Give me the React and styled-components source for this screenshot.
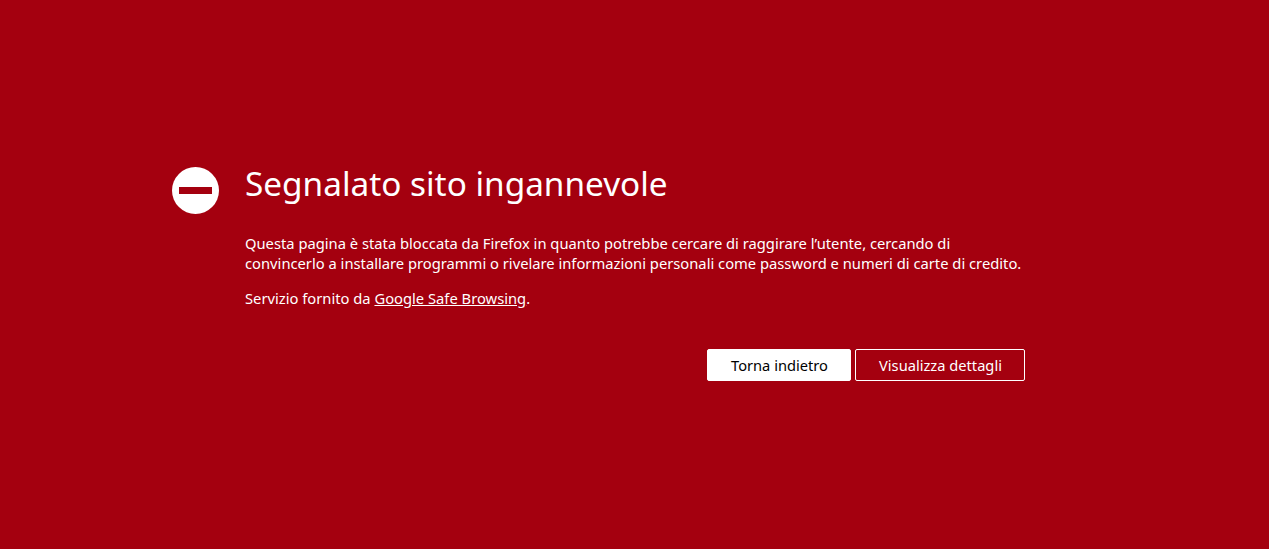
import styled, { createGlobalStyle } from "styled-components";

const GlobalStyle = createGlobalStyle`
  html, body {
    margin: 0;
    padding: 0;
    background: #a4000f;
  }
`;

const Page = styled.div`
  box-sizing: border-box;
  height: 549px;
  display: flex;
  align-items: center;
  justify-content: center;
  background: #a4000f;
  color: #fff;
  font-family: "Noto Sans", sans-serif;
  font-size: 14.74px;
`;

const Container = styled.div`
  box-sizing: border-box;
  width: 780px;
  margin: 0 0 1px 1px;
  position: relative;
`;

const Icon = styled.svg`
  position: absolute;
  left: -73px;
  top: 0;
  width: 47px;
  height: 47px;
`;

const Title = styled.h1`
  margin: 0 0 34px;
  font-size: 33.33px;
  font-weight: 400;
  line-height: 32px;
`;

const Paragraph = styled.p`
  margin: 0 0 15px;
  line-height: 20px;
`;

const Link = styled.a`
  color: #fff;
  text-decoration: underline;
`;

const Actions = styled.div`
  display: flex;
  justify-content: flex-end;
  gap: 4px;
  margin-top: 41px;
`;

const Button = styled.button`
  box-sizing: border-box;
  height: 32px;
  width: ${(p) => (p.$primary ? "144px" : "170px")};
  padding: 0 0 0 1px;
  border: 1px solid #fff;
  border-radius: 2px;
  background: ${(p) => (p.$primary ? "#fff" : "transparent")};
  color: ${(p) => (p.$primary ? "#000" : "#fff")};
  font-family: inherit;
  font-size: 14.67px;
`;

export default function App() {
  return (
    <>
      <GlobalStyle />
      <Page>
        <Container>
          <Icon viewBox="0 0 47 47">
            <circle cx="23.5" cy="23.5" r="23.5" fill="#fff" />
            <rect x="7" y="20" width="33" height="7" fill="#a4000f" />
          </Icon>
          <Title>Segnalato sito ingannevole</Title>
          <Paragraph>
            Questa pagina è stata bloccata da Firefox in quanto potrebbe cercare di raggirare l’utente, cercando di convincerlo a installare programmi o rivelare informazioni personali come password e numeri di carte di credito.
          </Paragraph>
          <Paragraph>
            Servizio fornito da <Link href="#">Google Safe Browsing</Link>.
          </Paragraph>
          <Actions>
            <Button $primary>Torna indietro</Button>
            <Button>Visualizza dettagli</Button>
          </Actions>
        </Container>
      </Page>
    </>
  );
}
